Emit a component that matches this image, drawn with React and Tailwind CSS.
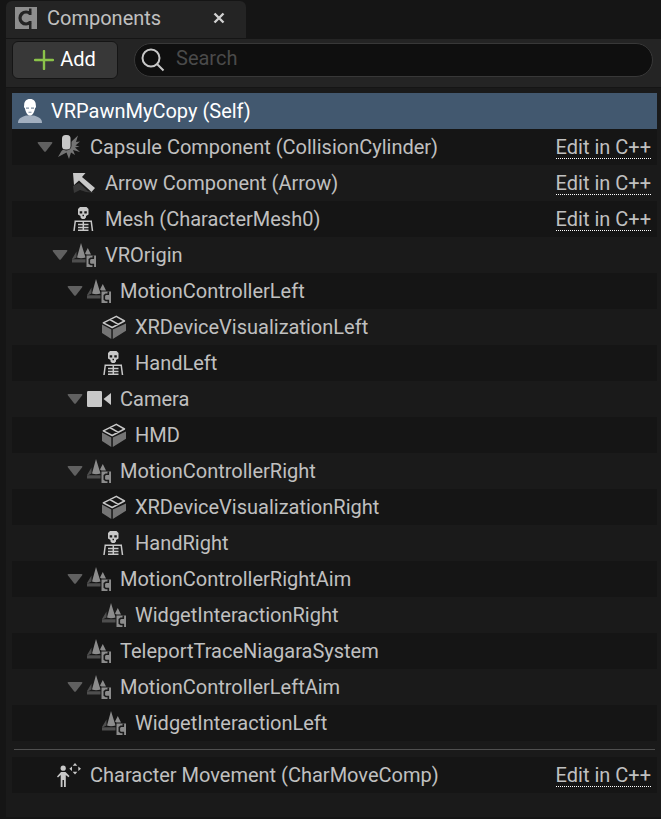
import { useState } from "react";

const PawnIcon = () => (
	<svg viewBox="0 0 24 24" className="size-6 shrink-0">
		<path d="M0 24c0-4 2-5.500 8-7.500h8c6 2 8 3.500 8 7.500z" fill="#a3b0c0" />
		<path d="M12 0c3.800 0 6 2.600 5.800 6.200.5.800.1 2.600-.7 3-.6 3.400-2.400 7.300-5.100 7.300S7.500 12.600 6.900 9.200c-.8-.4-1.200-2.200-.7-3C6 2.600 8.200 0 12 0z" fill="#fff" />
		<path d="M8 8.500h3v1.200H8zM13 8.500h3v1.200h-3zM10.500 12.800h3v1h-3z" fill="#7d8da0" />
	</svg>
);

const CapsuleIcon = () => (
	<svg viewBox="0 0 24 24" className="size-6 shrink-0">
		<path d="M14 7l7-6.500-2 6.500 4-.5-4.500 4 4 1-4.500 1 5 4.500-7-2L18 20l-4-2.500-2 6.500-2.500-6.500L1 22l3.500-6z" fill="#747474" />
		<rect x="4" y="-1" width="10.500" height="16.500" rx="5" fill="#151515" />
		<rect x="5" y="0" width="8.500" height="14.500" rx="3.500" fill="#c8c8c8" />
	</svg>
);

const ArrowIcon = () => (
	<svg viewBox="0 0 24 24" className="size-6 shrink-0">
		<path d="M1 15l6-3 9 8 7 2-9-1-6-2-6 3z" fill="#383838" />
		<path d="M1 2h12.500l-3.500 4 13 11-3.500 4L7 9.500 2 14z" fill="#c8c8c8" />
	</svg>
);

const SkeletonIcon = () => (
	<svg viewBox="0 0 24 24" className="size-6 shrink-0">
		<path
			fillRule="evenodd"
			d="M8 0h6.500l2 2v5.500l-2.500 1.500v1.500L12.500 12h-2.500L8.500 10.500V9L6 7.500V2zM7.700 4.200v2.300h2.500V4.200zM12.300 4.200v2.300h2.500V4.200zM10.500 7.800v1.400h1.500V7.800z"
			fill="#c8c8c8"
		/>
		<path d="M2.500 14.200h17.500M3.300 14L2 24M19.200 14l1.300 10M11.300 14v10M6 17.500h10.500M6 20.500h10.500M6 23.300h10.500" fill="none" stroke="#c8c8c8" strokeWidth="1.500" />
	</svg>
);

const SceneIcon = () => (
	<svg viewBox="0 0 24 24" className="size-6 shrink-0">
		<path d="M4.500 8.500v6L1.500 16H0zM0 16.200h13.500v3.300H0z" fill="#4e4e4e" />
		<path d="M9 0l4.500 14.500q-4.500 1.500-8.500 0zM15.800 5L19 11.500h-4.500l-1.500-1z" fill="#8c8c8c" />
		<path d="M14.500 12.500H24V24h-9.500z" fill="#8c8c8c" />
		<path d="M21.300 12.500v3M21.300 24v-3M22 15.300h-3.200l-1.500 1.200v3.800l1.500 1.200H22" fill="none" stroke="#1a1a1a" strokeWidth="1.600" />
	</svg>
);

const CubeIcon = () => (
	<svg viewBox="0 0 24 24" className="size-6 shrink-0">
		<path d="M0 9.500l9.300 5V24L0 18zM10.800 14.500L24 8.500v7.200L10.800 24z" fill="#747474" />
		<path d="M1.300 7.800L14.300 1.300 22.500 6 10.200 12.500z" fill="#151515" />
		<path d="M1.300 7.800L14.300 1.300 22.500 6 10.200 12.500zM7.800 4.500l8.500 4.800" fill="none" stroke="#c8c8c8" strokeWidth="1.500" strokeLinejoin="round" />
	</svg>
);

const CameraIcon = () => (
	<svg viewBox="0 0 24 24" className="size-6 shrink-0">
		<rect x="0" y="4" width="15" height="16" rx="1.200" fill="#c8c8c8" />
		<path d="M24 6v12l-7.500-6z" fill="#c8c8c8" />
	</svg>
);

const MovementIcon = () => (
	<svg viewBox="0 0 24 24" className="size-6 shrink-0" fill="#c8c8c8">
		<circle cx="6.200" cy="5.200" r="2.600" />
		<path d="M4 9h4.500l4 4-1 1.200L8.800 12v12H7v-7H5.500v7H3.700V12L1 14.500l-1-1z" />
		<path d="M18 0l2.300 2.700h-4.600zM18 11.500l-2.300-2.700h4.600zM12.300 5.800L15 3.500v4.600zM24 5.800l-2.700-2.300v4.600z" />
	</svg>
);

const ComponentsIcon = () => (
	<svg viewBox="0 0 22 22" className="size-[22px] shrink-0">
		<path d="M0 0h22v22H0z" fill="#8e8e8e" />
		<path d="M14 1.500h2.500V8H14zM14 14h2.500v8H14z" fill="#242424" />
		<path d="M15.300 6.800A6 6 0 1 0 15.300 15.200" fill="none" stroke="#242424" strokeWidth="3.200" />
	</svg>
);

const ICONS = {
	pawn: PawnIcon,
	capsule: CapsuleIcon,
	arrow: ArrowIcon,
	skeleton: SkeletonIcon,
	scene: SceneIcon,
	cube: CubeIcon,
	camera: CameraIcon,
	movement: MovementIcon,
};

const INDENT = ["pl-1.5", "pl-[25px]", "pl-10", "pl-[55px]", "pl-[70px]"];

const COMPONENTS = [
	{ name: "VRPawnMyCopy (Self)", icon: "pawn", depth: 0 },
	{ name: "Capsule Component (CollisionCylinder)", icon: "capsule", depth: 1, parent: true, native: true },
	{ name: "Arrow Component (Arrow)", icon: "arrow", depth: 2, native: true },
	{ name: "Mesh (CharacterMesh0)", icon: "skeleton", depth: 2, native: true },
	{ name: "VROrigin", icon: "scene", depth: 2, parent: true },
	{ name: "MotionControllerLeft", icon: "scene", depth: 3, parent: true },
	{ name: "XRDeviceVisualizationLeft", icon: "cube", depth: 4 },
	{ name: "HandLeft", icon: "skeleton", depth: 4 },
	{ name: "Camera", icon: "camera", depth: 3, parent: true },
	{ name: "HMD", icon: "cube", depth: 4 },
	{ name: "MotionControllerRight", icon: "scene", depth: 3, parent: true },
	{ name: "XRDeviceVisualizationRight", icon: "cube", depth: 4 },
	{ name: "HandRight", icon: "skeleton", depth: 4 },
	{ name: "MotionControllerRightAim", icon: "scene", depth: 3, parent: true },
	{ name: "WidgetInteractionRight", icon: "scene", depth: 4 },
	{ name: "TeleportTraceNiagaraSystem", icon: "scene", depth: 3 },
	{ name: "MotionControllerLeftAim", icon: "scene", depth: 3, parent: true },
	{ name: "WidgetInteractionLeft", icon: "scene", depth: 4 },
];

const MOVEMENT = { name: "Character Movement (CharMoveComp)", icon: "movement", depth: 1, native: true };

const Row = ({ item, selected, dark, onSelect, onToggle }) => {
	const Icon = ICONS[item.icon];

	return (
		<li
			onClick={onSelect}
			className={`flex h-9 items-center pr-1.5 ${INDENT[item.depth]} ${
				selected ? "bg-[#42586f] text-white" : dark ? "bg-[#151515]" : "bg-[#1a1a1a]"
			}`}
		>
			{item.depth > 0 && (
				<span className="mr-1 flex w-4 shrink-0">
					{item.parent && (
						<button type="button" aria-label={`Toggle ${item.name}`} onClick={onToggle}>
							<svg viewBox="0 0 16 10" className="h-2.5 w-4">
								<path d="M1.500 0h13q1.500 0 .5 1.500L9 9.300q-1 1-2 0L1 1.500Q0 0 1.500 0z" fill="#606060" />
							</svg>
						</button>
					)}
				</span>
			)}
			<Icon />
			<span className="ml-[9px] flex-1 truncate">{item.name}</span>
			{item.native && (
				<a href="#edit" className="border-b border-dotted border-white leading-[22px]">
					Edit in C++
				</a>
			)}
		</li>
	);
};

const App = () => {
	const [selected, setSelected] = useState("VRPawnMyCopy (Self)");
	const [collapsed, setCollapsed] = useState([]);

	const toggle = (e, name) => {
		e.stopPropagation();
		setCollapsed((prev) => (prev.includes(name) ? prev.filter((n) => n !== name) : [...prev, name]));
	};

	// drop every row that sits below a collapsed parent
	const rows = [];
	let hiddenBelow = Infinity;
	COMPONENTS.forEach((item) => {
		if (item.depth > hiddenBelow) return;
		hiddenBelow = collapsed.includes(item.name) ? item.depth : Infinity;
		rows.push(item);
	});

	return (
		<div className="flex min-h-screen flex-col bg-[#151515] pt-px pb-0.5 pl-1.5 font-[Roboto,sans-serif] text-xl text-[#c0c0c0]">
			<div className="flex">
				<div className="mb-px flex h-[37px] w-60 items-center rounded-t-md bg-[#242424] pr-5 pb-1 pl-[9px]">
					<ComponentsIcon />
					<h1 className="ml-2.5 flex-1">Components</h1>
					<button type="button" aria-label="Close tab" className="size-3.5">
						<svg viewBox="0 0 14 14" className="size-3.5">
							<path d="M2.500 2.500l9 9M11.500 2.500l-9 9" stroke="#d0d0d0" strokeWidth="2.400" />
						</svg>
					</button>
				</div>
			</div>

			<div className="flex h-12 items-start gap-4 bg-[#242424] pt-0.5 pr-2 pl-1.5">
				<button
					type="button"
					className="flex h-[38px] w-[106px] shrink-0 items-center justify-center gap-1.5 rounded-md border border-[#151515] bg-[#383838] pb-0.5 text-white"
				>
					<svg viewBox="0 0 20 20" className="mt-0.5 size-5">
						<path d="M10 1v18M1 10h18" stroke="#8bc34a" strokeWidth="2.400" strokeLinecap="round" />
					</svg>
					Add
				</button>
				<label className="mt-0.5 flex h-[34px] flex-1 items-center rounded-full border border-[#383838] bg-[#0f0f0f] pl-1.5">
					<svg viewBox="0 0 24 24" className="size-6 shrink-0" fill="none" stroke="#c8c8c8" strokeWidth="2">
						<circle cx="10" cy="10" r="8.500" />
						<path d="M16 16l6.500 6.500" />
					</svg>
					<input
						type="text"
						placeholder="Search"
						aria-label="Search"
						className="ml-[11px] w-full min-w-0 bg-transparent pb-1 outline-none placeholder:text-[#4a4a4a]"
					/>
				</label>
			</div>

			<main className="flex-1 border-t border-[#151515] bg-[#1a1a1a] pt-[5px] pr-1 pl-1.5">
				<ul>
					{rows.map((item, i) => (
						<Row
							key={item.name}
							item={item}
							dark={i % 2 === 1}
							selected={selected === item.name}
							onSelect={() => setSelected(item.name)}
							onToggle={(e) => toggle(e, item.name)}
						/>
					))}
				</ul>
				<hr className="mx-0.5 mt-2 mb-[7px] border-[#505050]" />
				<ul>
					<Row item={MOVEMENT} dark selected={selected === MOVEMENT.name} onSelect={() => setSelected(MOVEMENT.name)} />
				</ul>
			</main>
		</div>
	);
};

export default App;
